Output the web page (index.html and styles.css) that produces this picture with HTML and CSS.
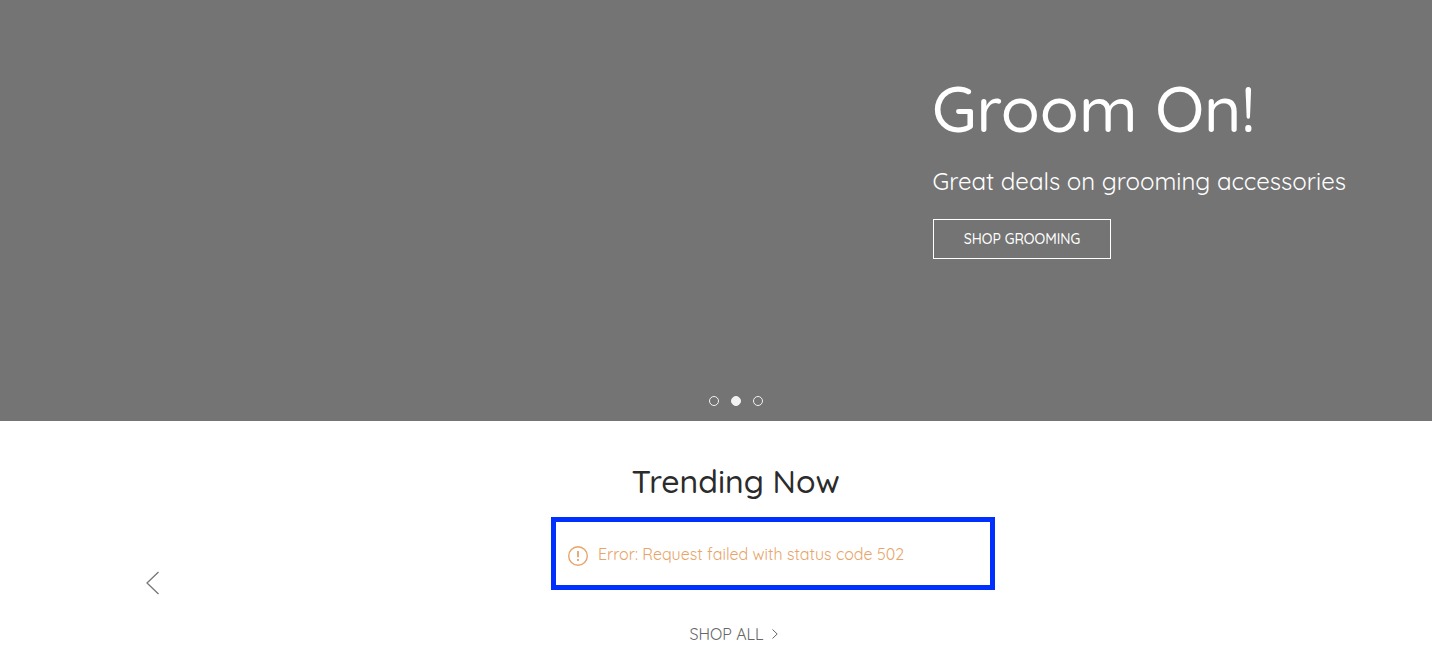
FILE: index.html
```html
<!DOCTYPE html>
<html lang="en">
<head>
<meta charset="utf-8">
<title>Groom On!</title>
<link rel="stylesheet" href="styles.css">
</head>
<body>
<section class="hero">
  <div class="hero-copy">
    <h1>Groom On!</h1>
    <p>Great deals on grooming accessories</p>
    <a class="button">SHOP GROOMING</a>
  </div>
  <div class="dots"><i></i><i class="active"></i><i></i></div>
</section>
<section class="trending">
  <h2>Trending Now</h2>
  <div class="carousel">
    <svg class="prev" width="14" height="24" viewBox="0 0 14 24"><path d="M12.5 1L1 12L12.5 23"/></svg>
    <div class="error">
      <svg class="alert" width="20" height="20" viewBox="0 0 20 20"><circle cx="10" cy="10" r="9.3"/><path class="mark" d="M10 5v6.2M10 13v2"/></svg>
      <span>Error: Request failed with status code 502</span>
    </div>
  </div>
  <a class="all">SHOP ALL<svg class="next" width="7" height="10" viewBox="0 0 7 10"><path d="M.5 .5L5.2 5L.5 9.5"/></svg></a>
</section>
</body>
</html>
```
FILE: styles.css
```css
* { box-sizing: border-box; }
body { margin: 0; height: 654px; overflow: hidden; background: #fff; font-family: Quicksand, Lato, sans-serif; }
h1, h2, p { margin: 0; font-weight: 400; white-space: nowrap; }
svg { display: block; flex: none; overflow: visible; }
.hero { height: 421px; padding: 82px 0 0 932px; background: #747474; color: #fff; display: flex; flex-direction: column; }
.hero-copy { height: 314px; }
h1 { height: 84px; font-size: 64px; line-height: 52px; font-weight: 500; }
p { height: 53px; padding-left: 0.5px; font-size: 24px; line-height: 30px; font-weight: 400; }
.button { display: flex; width: 178px; height: 40px; margin-left: 1px; border: 1px solid #fff; align-items: center; justify-content: center; font-size: 14px; font-weight: 500; }
.dots { display: flex; gap: 12px; margin-left: -223px; }
.dots i { width: 10px; height: 10px; border: 1px solid #f2f2f2; border-radius: 50%; }
.dots .active { background: #f2f2f2; }
.trending { padding-top: 40px; color: #2b2b2b; }
h2 { height: 56px; padding-left: 631.5px; font-size: 32px; line-height: 40px; font-weight: 500; }
.carousel { display: flex; height: 73px; padding-left: 146px; }
.prev { margin-top: 54px; fill: none; stroke: #777; stroke-width: 1.3; }
.error { display: flex; align-items: center; gap: 10px; width: 444px; height: 73px; margin-left: 391px; padding-left: 12px; border: 5px solid #0030ff; color: #e8a469; font-size: 16px; font-weight: 400; }
.alert { margin-top: 4px; fill: none; stroke: #e8a469; stroke-width: 1.4; }
.mark { stroke-width: 1.8; }
.all { display: flex; margin: 33px 0 0 689.5px; gap: 8px; color: #666; font-size: 16px; line-height: 22px; }
.next { margin-top: 6px; fill: none; stroke: #666; }
```
